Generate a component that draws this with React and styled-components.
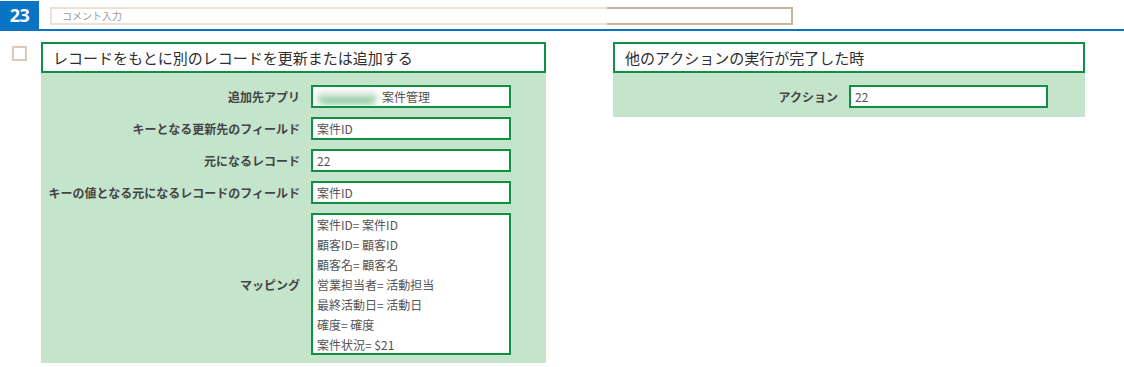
import styled, { createGlobalStyle } from "styled-components";

const GlobalStyle = createGlobalStyle`
  body {
    margin: 0;
    background: #ffffff;
    font-family: "Noto Sans CJK JP", "Noto Sans", sans-serif;
    color: #333333;
  }
`;

const Header = styled.div`
  display: flex;
  align-items: flex-end;
  height: 31px;
  border-bottom: 2px solid #0a74c4;
  box-sizing: border-box;
`;

const Number = styled.div`
  width: 39px;
  height: 28px;
  background: #0a74c4;
  color: #ffffff;
  font-family: "Open Sans", "Noto Sans", sans-serif;
  font-weight: 700;
  font-size: 18px;
  display: flex;
  align-items: center;
  justify-content: center;
  letter-spacing: -0.5px;
`;

const Comment = styled.div`
  margin-left: 11px;
  align-self: flex-start;
  margin-top: 7px;
  width: 743px;
  height: 18px;
  box-sizing: border-box;
  border: 2px solid;
  border-image: linear-gradient(to right, #ebe0d4 75%, #c8b49c 75%) 1;
  font-size: 10px;
  color: #999999;
  padding-left: 10px;
  line-height: 14px;
`;

const Content = styled.div`
  display: flex;
  align-items: flex-start;
  padding: 11px 0 0 12px;
`;

const Check = styled.div`
  width: 15px;
  height: 15px;
  box-sizing: border-box;
  border: 2px solid #dccab6;
  margin-top: 4px;
  margin-right: 14px;
`;

const Panel = styled.div`
  width: ${({ w }) => w}px;
  margin-right: ${({ mr }) => mr || 0}px;
`;

const Title = styled.div`
  height: 31px;
  box-sizing: border-box;
  border: 2px solid #0e9144;
  background: #ffffff;
  font-size: 15px;
  color: #2e2e2e;
  padding-left: 10px;
  display: flex;
  align-items: center;
`;

const Body = styled.div`
  background: #c4e4cc;
  display: grid;
  grid-template-columns: ${({ label }) => label}px ${({ field }) => field}px;
  column-gap: 11px;
  row-gap: 9px;
  padding: 12px 0 ${({ pb }) => pb}px;
  align-items: center;
`;

const Label = styled.div`
  text-align: right;
  font-size: 12px;
  font-weight: 700;
  color: #444444;
`;

const Field = styled.div`
  height: 23px;
  box-sizing: border-box;
  border: 2px solid #0e9144;
  background: #ffffff;
  font-size: 12px;
  color: #555555;
  padding-left: 4px;
  display: flex;
  align-items: center;
  white-space: nowrap;
  overflow: hidden;
`;

const Blur = styled.span`
  display: inline-block;
  width: 60px;
  height: 15px;
  margin-right: 5px;
  border-radius: 7px;
  background: linear-gradient(to bottom, #f4f4f4 25%, #5fb679 100%);
  filter: blur(3px);
`;

const Area = styled.div`
  height: 142px;
  box-sizing: border-box;
  border: 2px solid #0e9144;
  background: #ffffff;
  font-size: 12px;
  color: #555555;
  padding: 0 4px;
  line-height: 20px;
`;

const mapping = [
  "案件ID= 案件ID",
  "顧客ID= 顧客ID",
  "顧客名= 顧客名",
  "営業担当者= 活動担当",
  "最終活動日= 活動日",
  "確度= 確度",
  "案件状況= $21",
];

export default function App() {
  return (
    <>
      <GlobalStyle />
      <Header>
        <Number>23</Number>
        <Comment>コメント入力</Comment>
      </Header>
      <Content>
        <Check />
        <Panel w={505} mr={67}>
          <Title>レコードをもとに別のレコードを更新または追加する</Title>
          <Body label={259} field={200} pb={8}>
            <Label>追加先アプリ</Label>
            <Field>
              <Blur />
              案件管理
            </Field>
            <Label>キーとなる更新先のフィールド</Label>
            <Field>案件ID</Field>
            <Label>元になるレコード</Label>
            <Field>22</Field>
            <Label>キーの値となる元になるレコードのフィールド</Label>
            <Field>案件ID</Field>
            <Label>マッピング</Label>
            <Area>
              {mapping.map((m) => (
                <div key={m}>{m}</div>
              ))}
            </Area>
          </Body>
        </Panel>
        <Panel w={472}>
          <Title>他のアクションの実行が完了した時</Title>
          <Body label={225} field={199} pb={9}>
            <Label>アクション</Label>
            <Field>22</Field>
          </Body>
        </Panel>
      </Content>
    </>
  );
}
